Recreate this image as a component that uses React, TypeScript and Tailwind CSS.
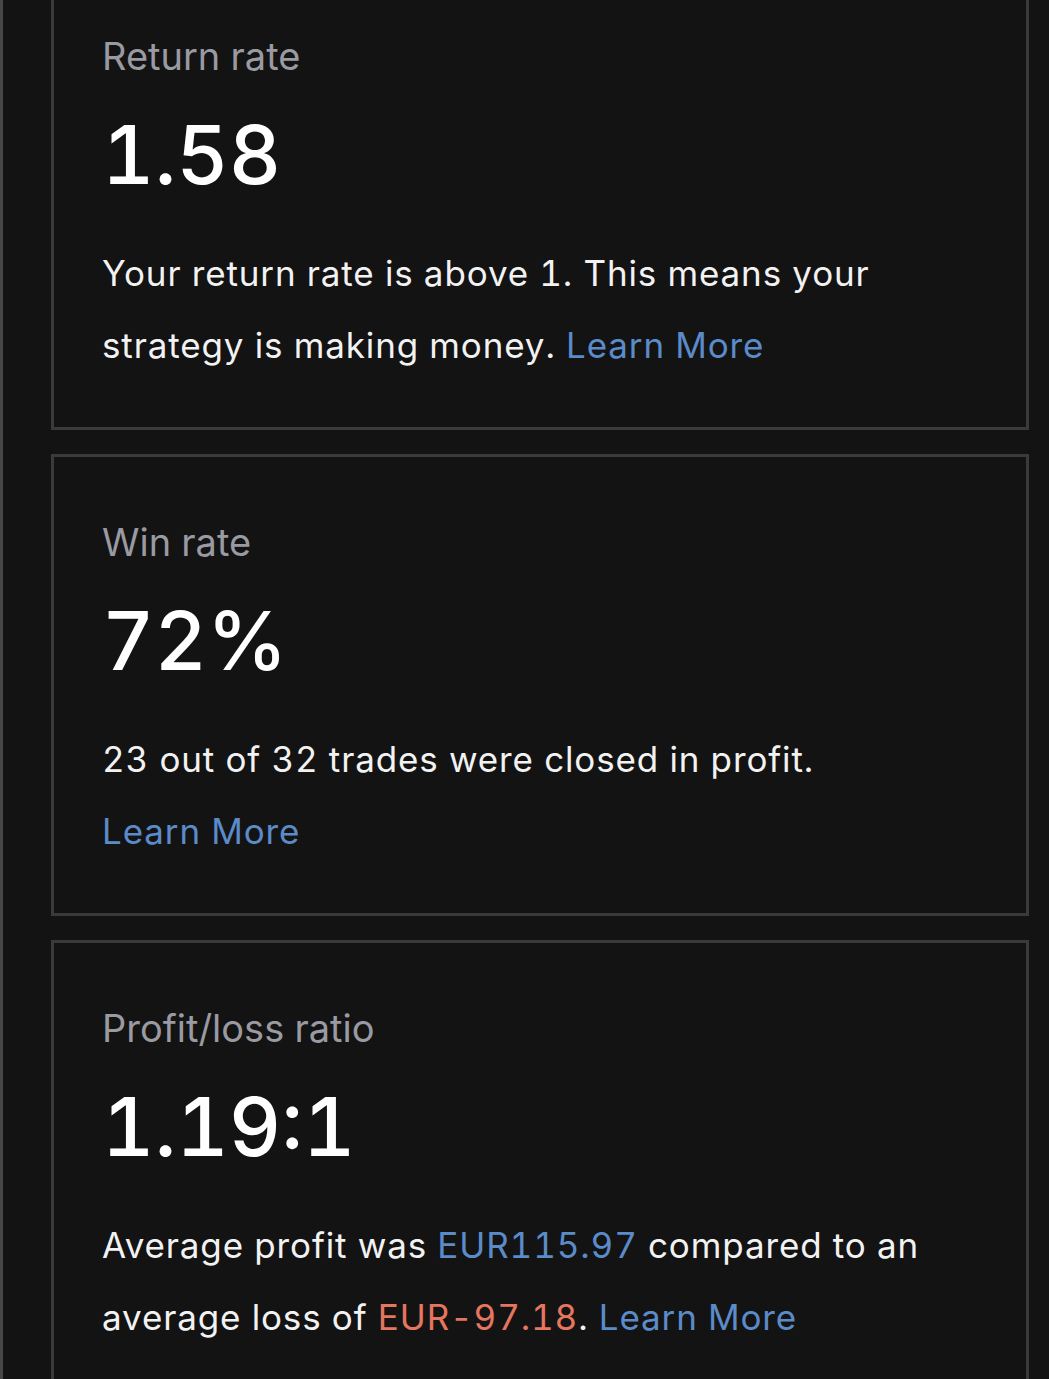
const blue = "text-[#5b8bc9]";

function StatCard({ label, value, children }: { label: string; value: string; children: React.ReactNode }) {
  return (
    <div className="border-[3px] border-[#3a3a3a] pl-[48px] pr-[40px] pt-[62px] pb-[46px] tabular-nums">
      <div className="text-[38px] leading-[46px] text-[#9a9aa2]">{label}</div>
      <div className="mt-[36px] text-[81px] font-medium leading-[81px] text-white">{value}</div>
      <p className="mt-[41px] text-[35px] leading-[72px] tracking-[0.025em] text-[#f2f2f2]">{children}</p>
    </div>
  );
}

export default function App() {
  return (
    <div
      className="min-h-[1379px] overflow-hidden bg-[#131313]"
      style={{ fontFamily: "Inter, 'Noto Sans', sans-serif" }}
    >
      <div className="min-h-[1379px] border-l-[3px] border-[#474747] pl-[48px] pr-[20px]">
        <div className="-mt-[32px] flex flex-col gap-[24px]">
          <StatCard label="Return rate" value="1.58">
            Your return rate is above 1. This means your strategy is making money.{" "}
            <span className={blue}>Learn More</span>
          </StatCard>
          <StatCard label="Win rate" value="72%">
            23 out of 32 trades were closed in profit.
            <br />
            <span className={blue}>Learn More</span>
          </StatCard>
          <StatCard label="Profit/loss ratio" value="1.19:1">
            Average profit was <span className={blue}>EUR115.97</span> compared to an average loss of{" "}
            <span className="text-[#e5765f]">EUR-97.18</span>. <span className={blue}>Learn More</span>
          </StatCard>
        </div>
      </div>
    </div>
  );
}
